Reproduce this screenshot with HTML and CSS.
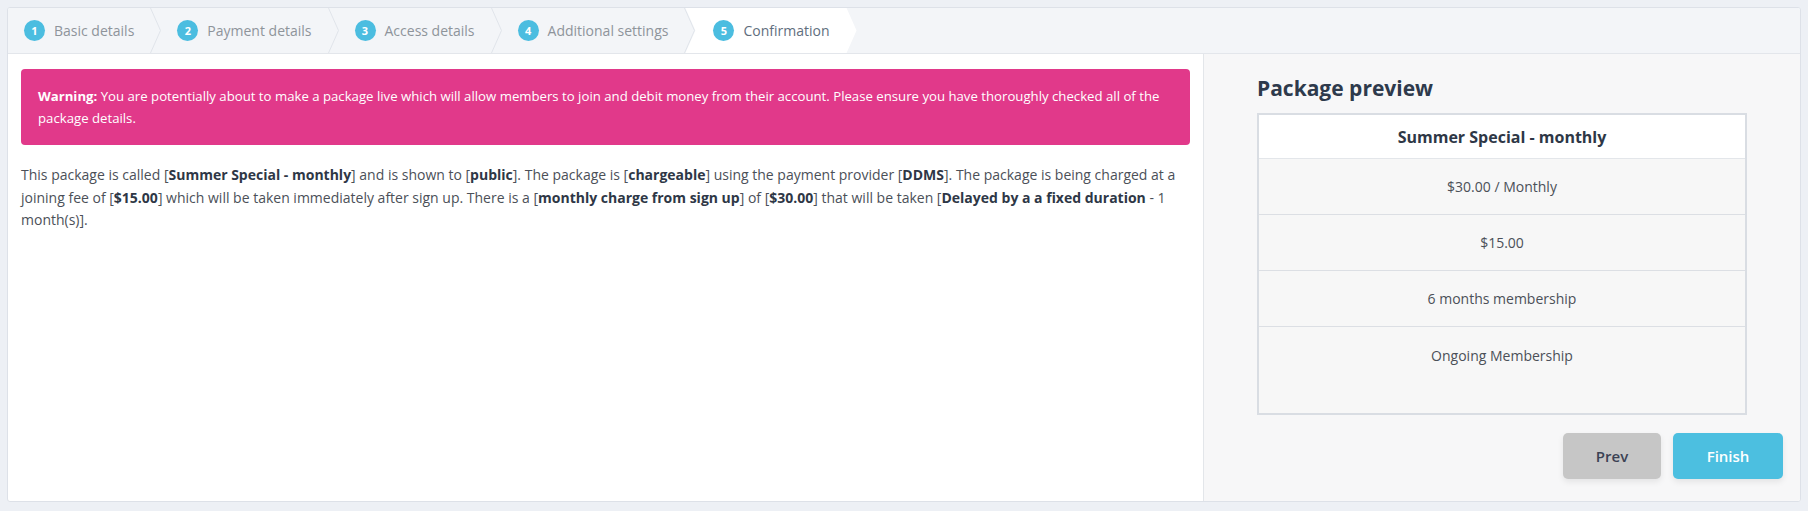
FILE: index.html
```html
<!DOCTYPE html>
<html lang="en">
<head>
<meta charset="utf-8">
<title>Package wizard - Confirmation</title>
<link rel="stylesheet" href="styles.css">
</head>
<body>
<div class="wizard">
  <ul class="steps">
    <li class="step"><span class="num">1</span><span class="label">Basic details</span></li>
    <li class="step"><span class="num">2</span><span class="label">Payment details</span></li>
    <li class="step"><span class="num">3</span><span class="label">Access details</span></li>
    <li class="step"><span class="num">4</span><span class="label">Additional settings</span></li>
    <li class="step current"><span class="num">5</span><span class="label">Confirmation</span></li>
  </ul>
  <div class="content">
    <div class="main">
      <div class="alert"><strong>Warning:</strong> You are potentially about to make a package live which will allow members to join and debit money from their account. Please ensure you have thoroughly checked all of the package details.</div>
      <p class="summary">This package is called [<b>Summer Special - monthly</b>] and is shown to [<b>public</b>]. The package is [<b>chargeable</b>] using the payment provider [<b>DDMS</b>]. The package is being charged at a joining fee of [<b>$15.00</b>] which will be taken immediately after sign up. There is a [<b>monthly charge from sign up</b>] of [<b>$30.00</b>] that will be taken [<b>Delayed by a a fixed duration</b> - 1 month(s)].</p>
    </div>
    <aside class="preview">
      <h2 class="preview-title">Package preview</h2>
      <div class="pkg">
        <div class="pkg-name">Summer Special - monthly</div>
        <div class="pkg-row">$30.00 / Monthly</div>
        <div class="pkg-row">$15.00</div>
        <div class="pkg-row">6 months membership</div>
        <div class="pkg-row pkg-last">Ongoing Membership</div>
      </div>
      <div class="actions">
        <button class="btn btn-prev" type="button">Prev</button>
        <button class="btn btn-finish" type="button">Finish</button>
      </div>
    </aside>
  </div>
</div>
</body>
</html>
```

FILE: styles.css
```css
* { box-sizing: border-box; }

html, body {
  margin: 0;
  padding: 0;
}

body {
  background: #edf0f5;
  font-family: "Open Sans", "Noto Sans", sans-serif;
  color: #4b5058;
  padding: 7px 7px 8px 7px;
}

.wizard {
  background: #fff;
  border: 1px solid #dde1e8;
  border-radius: 3px;
  overflow: hidden;
}

/* Steps bar */
.steps {
  list-style: none;
  margin: 0;
  padding: 0;
  display: flex;
  height: 46px;
  background: #f3f5f8;
  border-bottom: 1px solid #e3e6eb;
}

.step {
  position: relative;
  display: flex;
  align-items: center;
  gap: 9px;
  padding: 0 27px 0 16px;
  font-size: 14px;
  color: #8e949b;
  white-space: nowrap;
}

.step::after {
  content: "";
  position: absolute;
  right: 0;
  top: 0;
  width: 11px;
  height: 100%;
  background-image: url("data:image/svg+xml;utf8,<svg xmlns='http://www.w3.org/2000/svg' width='11' height='45' viewBox='0 0 11 45' preserveAspectRatio='none'><polyline points='0.5,0 10.5,22.5 0.5,45' fill='none' stroke='%23e0e4ea' stroke-width='1'/></svg>");
  background-size: 100% 100%;
}

.step .num {
  width: 21px;
  height: 21px;
  border-radius: 50%;
  background: #4bbde0;
  color: #fff;
  font-size: 11px;
  font-weight: 700;
  display: flex;
  align-items: center;
  justify-content: center;
  flex: none;
}

.step.current {
  background: #fff;
  margin-left: -10px;
  padding-left: 28px;
  color: #5f6e7e;
  clip-path: polygon(0 0, calc(100% - 10px) 0, 100% 50%, calc(100% - 10px) 100%, 0 100%, 10px 50%);
}

.step.current::after { display: none; }

/* Content */
.content {
  display: grid;
  grid-template-columns: 1195px 1fr;
}

.main {
  padding: 15px 13px;
}

.alert {
  background: #e1398a;
  color: #fff;
  border-radius: 4px;
  padding: 16px 17px;
  font-size: 13.2px;
  line-height: 22px;
}

.alert strong { font-weight: 700; }

.summary {
  margin: 19px 0 0;
  font-size: 14px;
  line-height: 22.5px;
  color: #4b5058;
}

.summary b {
  font-weight: 700;
  color: #2e3746;
}

/* Preview */
.preview {
  background: #f7f7f8;
  border-left: 1px solid #e3e6ea;
  padding: 20px 17px 22px;
}

.preview-title {
  margin: 0 36px 11px;
  font-size: 21px;
  line-height: 28px;
  font-weight: 700;
  color: #2e3a4c;
}

.pkg {
  margin: 0 36px;
  border: 2px solid #d9dde3;
  background: #f7f7f7;
  text-align: center;
  font-size: 14px;
  color: #4b5058;
}

.pkg-name {
  background: #fff;
  height: 44px;
  display: flex;
  align-items: center;
  justify-content: center;
  font-size: 16px;
  font-weight: 700;
  color: #2e3746;
  border-bottom: 1px solid #e3e6ea;
}

.pkg-row {
  height: 56px;
  display: flex;
  align-items: center;
  justify-content: center;
  border-bottom: 1px solid #dcdfe4;
}

.pkg-last {
  height: 86px;
  align-items: flex-start;
  padding-top: 19px;
  border-bottom: none;
}

.actions {
  display: flex;
  justify-content: flex-end;
  gap: 12px;
  margin-top: 18px;
}

.btn {
  height: 46px;
  border: none;
  border-radius: 5px;
  font-family: inherit;
  font-size: 15px;
  font-weight: 600;
  box-shadow: 0 3px 6px rgba(0, 0, 0, 0.08);
  cursor: pointer;
}

.btn-prev {
  width: 98px;
  background: #c6c6c6;
  color: #3b4254;
}

.btn-finish {
  width: 110px;
  background: #4cbfe0;
  color: #fff;
}
```
